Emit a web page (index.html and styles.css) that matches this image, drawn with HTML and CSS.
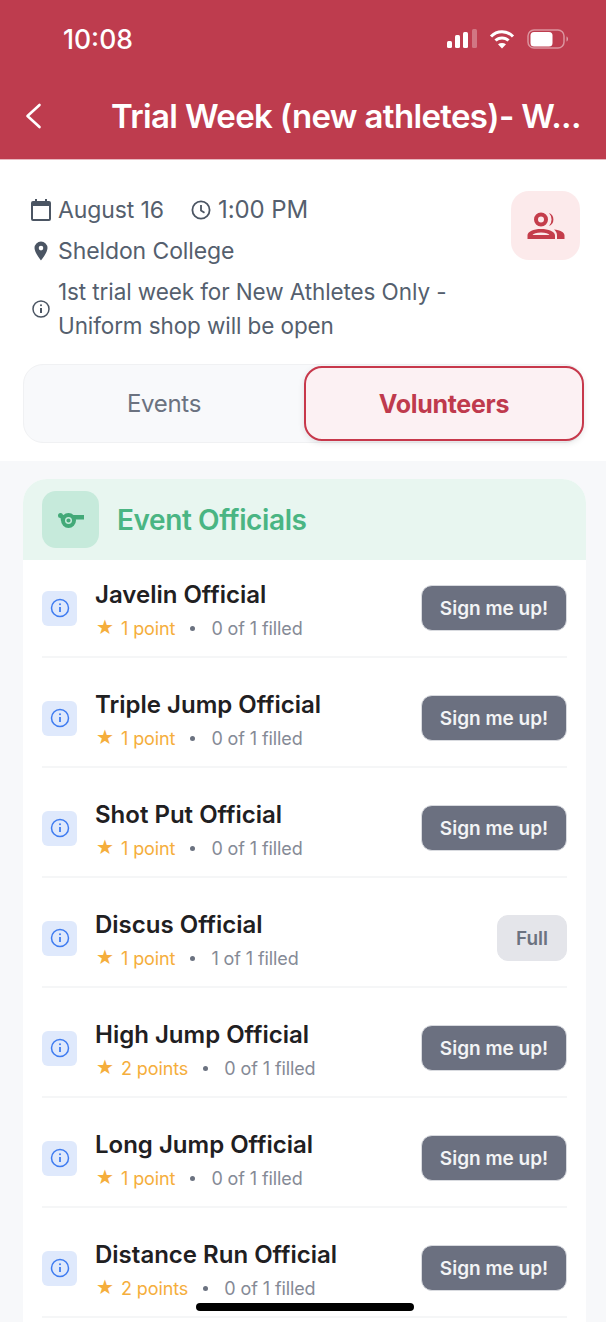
FILE: index.html
```html
<!DOCTYPE html>
<html lang="en">

<head>
    <meta charset="UTF-8">
    <meta name="viewport" content="width=device-width, initial-scale=1.0">
    <title>Trial Week</title>

    <link rel="stylesheet" href="styles.css">
</head>

<body>

    <header class="topo">
        <div class="status">
            <span class="hora">10:08</span>
            <div class="status-icones">
                <svg width="30" height="20" viewBox="0 0 30 20">
                    <rect x="0" y="12" width="5" height="7" rx="1.5" fill="#fff" />
                    <rect x="8" y="6" width="5" height="13" rx="1.5" fill="#fff" />
                    <rect x="16" y="3" width="5" height="16" rx="1.5" fill="#fff" />
                    <rect x="25" y="0" width="5" height="19" rx="1.5" fill="#fff" opacity=".3" />
                </svg>
                <svg width="26" height="20" viewBox="0 0 26 20" fill="none" stroke="#fff" stroke-width="3">
                    <path d="M2 7.500C8 1 18 1 24 7.500" />
                    <path d="M6.500 11.500C10 8 16 8 19.500 11.500" />
                    <path d="M13 19.500 9 15.300C11.500 13.500 14.500 13.500 17 15.300Z" fill="#fff" stroke="none" />
                </svg>
                <svg width="42" height="20" viewBox="0 0 42 20">
                    <rect x="1" y="1" width="36" height="18" rx="6" fill="none" stroke="#fff" stroke-width="1.500" opacity=".45" />
                    <rect x="3.500" y="3" width="22" height="14.500" rx="3.500" fill="#fff" />
                    <path d="M39.500 7.500C41.500 8 41.500 12 39.500 12.500Z" fill="#fff" opacity=".5" />
                </svg>
            </div>
        </div>
        <div class="barra">
            <svg class="voltar" width="20" height="30" viewBox="0 0 20 30" fill="none" stroke="#fff" stroke-width="2.600" stroke-linecap="round" stroke-linejoin="round">
                <path d="M15.500 4 3.500 15 15.500 26" />
            </svg>
            <h1>Trial Week (new athletes)- W...</h1>
        </div>
    </header>

    <section class="resumo">
        <div class="resumo-linhas">
            <div class="linha">
                <svg class="ico" width="20" height="22" viewBox="0 0 20 22" fill="#4b5563">
                    <path d="M4 0h2v2h8V0h2v2h2a2 2 0 0 1 2 2v16a2 2 0 0 1-2 2H2a2 2 0 0 1-2-2V4a2 2 0 0 1 2-2h2V0Zm-2 7v13h16V7H2Z" />
                </svg>
                <span>August 16</span>
                <svg class="ico ico-hora" width="20" height="20" viewBox="0 0 20 20" fill="none" stroke="#4b5563" stroke-width="1.800">
                    <circle cx="10" cy="10" r="8.600" />
                    <path d="M10 5v5.500l3.500 2.200" />
                </svg>
                <span class="hora-evento">1:00 PM</span>
            </div>
            <div class="linha">
                <svg class="ico" width="20" height="20" viewBox="0 0 20 20">
                    <path fill-rule="evenodd" fill="#4b5563" d="M10 0.500a6.500 6.500 0 0 0-6.500 6.500c0 4.500 6.500 12.500 6.500 12.500S16.500 11.500 16.500 7A6.500 6.500 0 0 0 10 .5Zm0 4.300a2.300 2.300 0 1 1 0 4.600 2.300 2.300 0 0 1 0-4.600Z" />
                </svg>
                <span>Sheldon College</span>
            </div>
            <div class="linha linha-nota">
                <svg class="ico" width="20" height="20" viewBox="0 0 20 20" fill="none" stroke="#4b5563" stroke-width="1.500">
                    <circle cx="10" cy="10" r="8" />
                    <path d="M10 9v5" stroke-width="2" />
                    <circle cx="10" cy="6.300" r="1" fill="#4b5563" stroke="none" />
                </svg>
                <span>1st trial week for New Athletes Only -<br>Uniform shop will be open</span>
            </div>
        </div>
        <div class="grupo">
            <svg width="38" height="28" viewBox="0 0 38 28" fill="#c43d4b">
                <path fill-rule="evenodd" d="M14 0.500a7 7 0 1 1 0 14 7 7 0 0 1 0-14Zm0 4a3 3 0 1 0 0 6 3 3 0 0 0 0-6Z" />
                <path d="M22 1a7 7 0 0 1 0 13 9.500 9.500 0 0 0 0-13Z" />
                <path fill-rule="evenodd" d="M0.500 27v-3.500c0-4 6-6.500 13.500-6.500s14 2.500 14 6.500V27H.5Zm5-4h17c-1-1.500-4-2.500-8.500-2.500S6.500 21.500 5.500 23Z" />
                <path d="M27 17.500c6 .500 10.500 2.500 10.500 6V27H30v-3.500c0-2.500-1-4.500-3-6Z" />
            </svg>
        </div>
    </section>

    <div class="abas-wrap">
        <div class="abas">
            <div class="aba">Events</div>
            <div class="aba ativa">Volunteers</div>
        </div>
    </div>

    <main class="conteudo">
        <section class="card">
            <div class="card-topo">
                <div class="apito">
                    <svg width="26" height="16" viewBox="0 0 26 16">
                        <circle cx="2.500" cy="3.500" r="2.500" fill="#43a978" />
                        <path d="M2 3h24v4.500h-9V9H3Z" fill="#43a978" />
                        <circle cx="10.500" cy="8.500" r="7.500" fill="#43a978" />
                        <circle cx="10.500" cy="8.500" r="2.800" fill="none" stroke="#c6eadb" stroke-width="1.400" />
                    </svg>
                </div>
                <h2>Event Officials</h2>
            </div>

            <ul class="lista">
                <li class="item">
                    <div class="info"><svg width="20" height="20" viewBox="0 0 20 20" fill="none" stroke="#3f7cf0" stroke-width="1.500"><circle cx="10" cy="10" r="8.500" /><path d="M10 9v5" stroke-width="1.800" /><circle cx="10" cy="6.300" r="1" fill="#3f7cf0" stroke="none" /></svg></div>
                    <div class="item-texto">
                        <h3>Javelin Official</h3>
                        <p><span class="pontos"><span class="estrela">★</span>1 point</span><span class="ponto"></span><span>0 of 1 filled</span></p>
                    </div>
                    <button class="btn">Sign me up!</button>
                </li>
                <li class="item">
                    <div class="info"><svg width="20" height="20" viewBox="0 0 20 20" fill="none" stroke="#3f7cf0" stroke-width="1.500"><circle cx="10" cy="10" r="8.500" /><path d="M10 9v5" stroke-width="1.800" /><circle cx="10" cy="6.300" r="1" fill="#3f7cf0" stroke="none" /></svg></div>
                    <div class="item-texto">
                        <h3>Triple Jump Official</h3>
                        <p><span class="pontos"><span class="estrela">★</span>1 point</span><span class="ponto"></span><span>0 of 1 filled</span></p>
                    </div>
                    <button class="btn">Sign me up!</button>
                </li>
                <li class="item">
                    <div class="info"><svg width="20" height="20" viewBox="0 0 20 20" fill="none" stroke="#3f7cf0" stroke-width="1.500"><circle cx="10" cy="10" r="8.500" /><path d="M10 9v5" stroke-width="1.800" /><circle cx="10" cy="6.300" r="1" fill="#3f7cf0" stroke="none" /></svg></div>
                    <div class="item-texto">
                        <h3>Shot Put Official</h3>
                        <p><span class="pontos"><span class="estrela">★</span>1 point</span><span class="ponto"></span><span>0 of 1 filled</span></p>
                    </div>
                    <button class="btn">Sign me up!</button>
                </li>
                <li class="item">
                    <div class="info"><svg width="20" height="20" viewBox="0 0 20 20" fill="none" stroke="#3f7cf0" stroke-width="1.500"><circle cx="10" cy="10" r="8.500" /><path d="M10 9v5" stroke-width="1.800" /><circle cx="10" cy="6.300" r="1" fill="#3f7cf0" stroke="none" /></svg></div>
                    <div class="item-texto">
                        <h3>Discus Official</h3>
                        <p><span class="pontos"><span class="estrela">★</span>1 point</span><span class="ponto"></span><span>1 of 1 filled</span></p>
                    </div>
                    <button class="btn btn-cheio">Full</button>
                </li>
                <li class="item">
                    <div class="info"><svg width="20" height="20" viewBox="0 0 20 20" fill="none" stroke="#3f7cf0" stroke-width="1.500"><circle cx="10" cy="10" r="8.500" /><path d="M10 9v5" stroke-width="1.800" /><circle cx="10" cy="6.300" r="1" fill="#3f7cf0" stroke="none" /></svg></div>
                    <div class="item-texto">
                        <h3>High Jump Official</h3>
                        <p><span class="pontos"><span class="estrela">★</span>2 points</span><span class="ponto"></span><span>0 of 1 filled</span></p>
                    </div>
                    <button class="btn">Sign me up!</button>
                </li>
                <li class="item">
                    <div class="info"><svg width="20" height="20" viewBox="0 0 20 20" fill="none" stroke="#3f7cf0" stroke-width="1.500"><circle cx="10" cy="10" r="8.500" /><path d="M10 9v5" stroke-width="1.800" /><circle cx="10" cy="6.300" r="1" fill="#3f7cf0" stroke="none" /></svg></div>
                    <div class="item-texto">
                        <h3>Long Jump Official</h3>
                        <p><span class="pontos"><span class="estrela">★</span>1 point</span><span class="ponto"></span><span>0 of 1 filled</span></p>
                    </div>
                    <button class="btn">Sign me up!</button>
                </li>
                <li class="item">
                    <div class="info"><svg width="20" height="20" viewBox="0 0 20 20" fill="none" stroke="#3f7cf0" stroke-width="1.500"><circle cx="10" cy="10" r="8.500" /><path d="M10 9v5" stroke-width="1.800" /><circle cx="10" cy="6.300" r="1" fill="#3f7cf0" stroke="none" /></svg></div>
                    <div class="item-texto">
                        <h3>Distance Run Official</h3>
                        <p><span class="pontos"><span class="estrela">★</span>2 points</span><span class="ponto"></span><span>0 of 1 filled</span></p>
                    </div>
                    <button class="btn">Sign me up!</button>
                </li>
            </ul>
        </section>
    </main>

    <div class="home"></div>

</body>

</html>
```

FILE: styles.css
```css
* {
    margin: 0;
    padding: 0;
    box-sizing: border-box;
}

body {
    width: 606px;
    height: 1322px;
    overflow: hidden;
    background-color: #fff;
    font-family: Inter, "Liberation Sans", sans-serif;
    position: relative;
}

.topo {
    height: 160px;
    background-color: #be3c4e;
    color: #fff;
    border-bottom: 1px solid #e8b8bf;
}

.status {
    height: 78px;
    padding: 23px 37px 0 63px;
    display: flex;
    justify-content: space-between;
    align-items: flex-start;
}

.hora {
    font-size: 26.5px;
    line-height: 32px;
    font-weight: 500;
}

.status-icones {
    display: flex;
    align-items: center;
    gap: 12px;
    padding-top: 6px;
}

.barra {
    display: flex;
    align-items: center;
    height: 76px;
    padding-left: 24px;
}

.voltar {
    flex: none;
}

.barra h1 {
    margin-left: 67px;
    font-size: 33px;
    font-weight: 600;
    letter-spacing: -.65px;
    white-space: nowrap;
}

.resumo {
    display: flex;
    justify-content: space-between;
    padding: 35px 26px 0 31px;
    color: #555f6e;
    height: 204px;
}

.resumo-linhas {
    display: flex;
    flex-direction: column;
    gap: 11px;
    font-size: 23px;
    line-height: 30px;
    letter-spacing: -.1px;
}

.linha {
    display: flex;
    align-items: center;
    gap: 7px;
}

.linha-nota {
    font-size: 22.5px;
    line-height: 34px;
    margin-top: -2px;
}

.ico {
    flex: none;
}

.ico-hora {
    margin-left: 20px;
}

.hora-evento {
    font-size: 24px;
}

.grupo {
    width: 69px;
    height: 69px;
    margin-top: -4px;
    background-color: #fceaeb;
    border-radius: 18px;
    display: flex;
    align-items: center;
    justify-content: center;
}

.abas-wrap {
    padding: 0 22px 18px 23px;
}

.abas {
    height: 79px;
    display: flex;
    background-color: #f8f9fb;
    border: 1px solid #f0f1f3;
    border-radius: 20px;
}

.aba {
    flex: 1;
    display: flex;
    align-items: center;
    justify-content: center;
    font-size: 24px;
    color: #6b7280;
    letter-spacing: -.3px;
}

.aba.ativa {
    flex: none;
    width: 280px;
    height: 75px;
    margin: 1px -1px 0 0;
    background-color: #fcf1f3;
    border: 2px solid #c7384b;
    border-radius: 18px;
    color: #bf3a4d;
    font-size: 25px;
    font-weight: 700;
    box-shadow: 0 2px 6px rgba(0, 0, 0, .1);
}

.conteudo {
    background-color: #f7f8fa;
    padding: 18px 20px 0 23px;
    height: 862px;
}

.card {
    height: 100%;
    background-color: #fff;
    border-radius: 24px 24px 0 0;
}

.card-topo {
    height: 81px;
    background-color: #e8f6f0;
    border-radius: 24px 24px 0 0;
    display: flex;
    align-items: center;
    padding: 0 19px;
    gap: 18px;
}

.apito {
    width: 57px;
    height: 57px;
    background-color: #c6eadb;
    border-radius: 14px;
    display: flex;
    align-items: center;
    justify-content: center;
}

.card-topo h2 {
    font-size: 28px;
    font-weight: 600;
    color: #4ab583;
    letter-spacing: -.4px;
}

.lista {
    list-style: none;
    padding: 10px 19px 0;
}

.item {
    height: 110px;
    display: flex;
    align-items: center;
    border-bottom: 2px solid #f5f6f7;
    padding-top: 12px;
}

.item:first-child {
    height: 98px;
    padding-top: 0;
    margin-top: -10px;
}

.info {
    width: 35px;
    height: 35px;
    flex: none;
    background-color: #dfe9fc;
    border-radius: 6px;
    display: flex;
    align-items: center;
    justify-content: center;
}

.item-texto {
    flex: 1;
    margin-left: 19px;
    margin-top: 6px;
}

.item h3 {
    margin-left: -1px;
    font-size: 24px;
    line-height: 30px;
    font-weight: 600;
    color: #1f2022;
}

.item p {
    display: flex;
    align-items: center;
    margin-top: 5px;
    font-size: 18px;
    line-height: 24px;
    color: #858a96;
    letter-spacing: -.1px;
}

.pontos {
    color: #f5ae3c;
    display: flex;
    align-items: center;
}

.estrela {
    font-family: "DejaVu Sans", sans-serif;
    font-size: 20px;
    width: 25px;
    margin-bottom: 3px;
}

.ponto {
    width: 5px;
    height: 5px;
    background-color: #6b7280;
    border-radius: 50%;
    margin: 0 16px 0 15px;
}

.btn {
    flex: none;
    width: 146px;
    height: 46px;
    border: 1px solid #d9dbe0;
    border-radius: 11px;
    background-color: #6b7080;
    color: #f2f3f5;
    font-family: inherit;
    font-size: 19px;
    font-weight: 600;
}

.btn-cheio {
    width: 70px;
    background-color: #e4e5ea;
    border-color: #e4e5ea;
    color: #6b7280;
}

.home {
    position: absolute;
    left: 196px;
    top: 1303px;
    width: 218px;
    height: 8px;
    border-radius: 4px;
    background-color: #000;
}
```
